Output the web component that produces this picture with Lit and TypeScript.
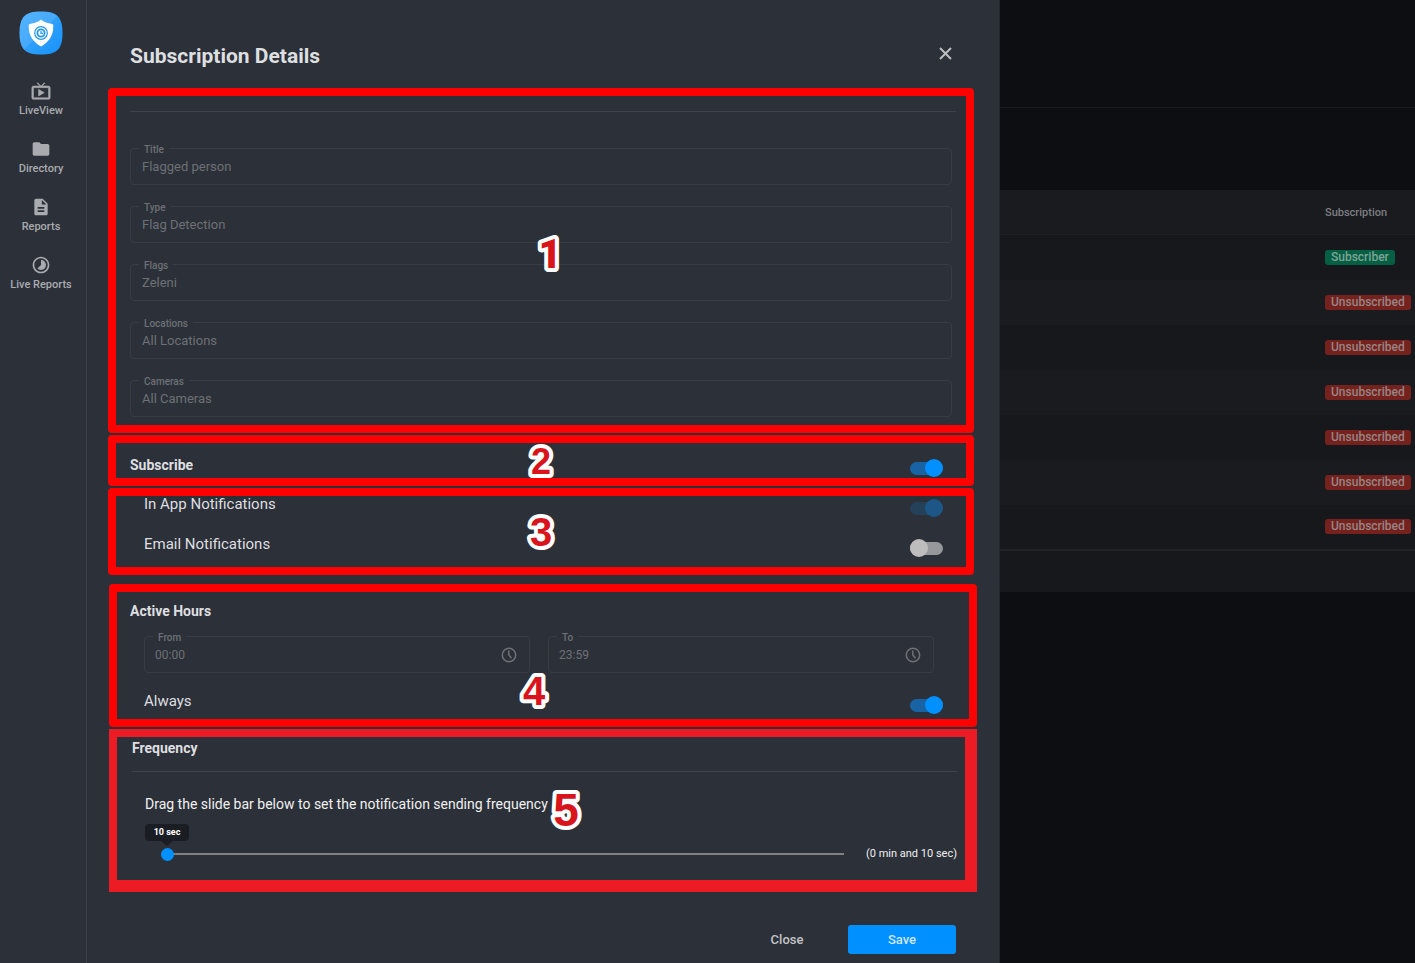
import { LitElement, html, css, svg } from "lit";
import { customElement, property, state } from "lit/decorators.js";
import { classMap } from "lit/directives/class-map.js";

const navIcons = {
  live: svg`<path d="M21 6h-7.590l3.290-3.290L16 2l-4 4-4-4-.7.710L10.590 6H3c-1.100 0-2 .890-2 2v12c0 1.100.9 2 2 2h18c1.100 0 2-.9 2-2V8c0-1.110-.9-2-2-2zm0 14H3V8h18v12zM9 10v8l7-4z" stroke="currentColor" stroke-width=".6"/>`,
  folder: svg`<path d="M10 4H4c-1.100 0-1.990.9-1.990 2L2 18c0 1.100.9 2 2 2h16c1.100 0 2-.9 2-2V8c0-1.100-.9-2-2-2h-8l-2-2z"/>`,
  report: svg`<path d="M14 2H6c-1.100 0-1.990.9-1.990 2L4 20c0 1.100.890 2 1.990 2H18c1.100 0 2-.9 2-2V8l-6-6zm2 16H8v-2h8v2zm0-4H8v-2h8v2zm-3-5V3.500L18.500 9H13z"/>`,
  timelapse: svg`<path d="M16.240 7.760C15.070 6.590 13.540 6 12 6v6l-4.240 4.240c2.340 2.340 6.140 2.340 8.490 0 2.340-2.340 2.340-6.140-.01-8.480zM12 2C6.480 2 2 6.480 2 12s4.480 10 10 10 10-4.480 10-10S17.520 2 12 2zm0 18c-4.420 0-8-3.580-8-8s3.580-8 8-8 8 3.580 8 8-3.580 8-8 8z"/>`,
};

@customElement("side-nav")
export class SideNav extends LitElement {
  static styles = css`
    :host {
      display: flex;
      flex-direction: column;
      align-items: center;
      padding: 11px 4px 0;
      box-sizing: border-box;
      background: #2c3038;
      border-right: 1px solid #3a3e46;
    }
    .logo { display: block; width: 44px; height: 44px; margin-right: 4px; }
    .nav { display: flex; flex-direction: column; gap: 20px; margin-top: 26px; width: 100%; }
    .item {
      display: flex;
      flex-direction: column;
      align-items: center;
      gap: 2px;
      padding-right: 4px;
      color: #a9abaf;
      font-size: 11px;
      font-weight: 500;
      line-height: 16px;
      white-space: nowrap;
      text-decoration: none;
    }
    .item svg { display: block; width: 20px; height: 20px; fill: currentColor; }
  `;
  render() {
    const items = [
      ["LiveView", navIcons.live],
      ["Directory", navIcons.folder],
      ["Reports", navIcons.report],
      ["Live Reports", navIcons.timelapse],
    ];
    return html`
      <svg class="logo" viewBox="0 0 44 44" aria-hidden="true">
        <defs>
          <linearGradient id="g" x1="0" y1="0" x2="1" y2="1">
            <stop offset="0" stop-color="#55b4ff" />
            <stop offset="0.490" stop-color="#45a9fc" />
            <stop offset="0.500" stop-color="#2f9ffb" />
            <stop offset="1" stop-color="#1593fb" />
          </linearGradient>
        </defs>
        <path d="M22 .5C38 .5 43.500 6 43.500 22S38 43.500 22 43.500.5 38 .5 22 6 .5 22 .5z" fill="url(#g)" />
        <path d="M22 8.500C25 11 29 12.300 32.500 12.700c1.300.2 1.800.9 1.800 2.100C34.300 25 30 31 22 35.500 14 31 9.700 25 9.700 14.800c0-1.200.5-1.900 1.800-2.100C15 12.300 19 11 22 8.500z" fill="#fff" />
        <circle cx="22" cy="22" r="6.300" fill="none" stroke="#2196f3" stroke-width="1.200" />
        <circle cx="22" cy="22" r="3.600" fill="none" stroke="#2196f3" stroke-width="1.800" />
        <path d="M22 20v2.300h2" fill="none" stroke="#2196f3" stroke-width="1.200" />
      </svg>
      <nav class="nav">
        ${items.map(([label, icon]) => html`<a class="item" href="#"><svg viewBox="0 0 24 24" aria-hidden="true">${icon}</svg>${label}</a>`)}
      </nav>
    `;
  }
}

@customElement("outlined-field")
export class OutlinedField extends LitElement {
  @property() label = "";
  @property() value = "";
  @property({ type: Boolean }) clock = false;
  static styles = css`
    :host { display: block; position: relative; }
    .box {
      display: flex;
      align-items: center;
      height: 37px;
      box-sizing: border-box;
      padding: 0 12px 0 11px;
      border: 1px solid #383c44;
      border-radius: 4px;
    }
    .label {
      position: absolute;
      top: -5px;
      left: 9px;
      padding: 0 5px;
      background: #2c3038;
      color: #6d7076;
      font-size: 10px;
      font-weight: 500;
      line-height: 14px;
    }
    .input {
      flex: 1;
      min-width: 0;
      padding: 0;
      border: 0;
      outline: 0;
      background: none;
      color: #6d7076;
      font: 13px/16px Roboto, sans-serif;
    }
    .timed { padding-left: 10px; }
    .timed .input { font-size: 12px; }
    .icon { width: 16px; height: 16px; fill: none; stroke: #6d7076; stroke-width: 1.500; }
  `;
  render() {
    return html`
      <label class="label" for="f">${this.label}</label>
      <div class=${classMap({ box: true, timed: this.clock })}>
        <input class="input" id="f" type="text" disabled .value=${this.value} />
        ${this.clock
          ? html`<svg class="icon" viewBox="0 0 16 16" aria-hidden="true"><circle cx="8" cy="8" r="6.700" /><path d="M7.800 3.500V8l2.700 3.200" /></svg>`
          : null}
      </div>
    `;
  }
}

@customElement("toggle-row")
export class ToggleRow extends LitElement {
  @property() label = "";
  @property({ type: Boolean }) on = false;
  @property({ type: Boolean }) disabled = false;
  @property({ type: Boolean }) strong = false;
  static styles = css`
    :host { display: block; }
    .row { display: flex; justify-content: space-between; align-items: flex-start; }
    .text { color: #dedfe0; font-size: 15px; line-height: 16px; }
    .strong { font-size: 14px; font-weight: 700; line-height: 18px; }
    .toggle {
      appearance: none;
      position: relative;
      width: 33px;
      height: 18px;
      margin: 3px 0 0;
    }
    .toggle::before {
      content: "";
      position: absolute;
      inset: 3px 0 2px;
      border-radius: 7px;
      background: #96989c;
    }
    .toggle::after {
      content: "";
      position: absolute;
      top: 0;
      left: 0;
      width: 18px;
      height: 18px;
      border-radius: 50%;
      background: #bdbdbd;
    }
    .toggle:checked::before { background: #1763a4; }
    .toggle:checked::after { left: auto; right: 0; background: #0090ff; }
    .toggle:disabled::before { background: #254059; }
    .toggle:disabled::after { background: #1c5788; }
  `;
  render() {
    return html`
      <div class="row">
        <label class=${classMap({ text: true, strong: this.strong })} for="t">${this.label}</label>
        <input class="toggle" id="t" type="checkbox" .checked=${this.on} ?disabled=${this.disabled} />
      </div>
    `;
  }
}

@customElement("step-mark")
export class StepMark extends LitElement {
  @property() n = "";
  @property({ type: Number }) size = 40;
  static styles = css`
    :host { display: block; position: absolute; transform: translate(-50%, -50%); pointer-events: none; }
    .art { display: block; width: 60px; height: 60px; }
    .digit {
      fill: #d8141c;
      stroke: #ffffff;
      stroke-width: 8px;
      stroke-linejoin: round;
      paint-order: stroke fill;
      font-family: "Liberation Sans", sans-serif;
      font-weight: 700;
      text-anchor: middle;
    }
    .plain { font-family: Roboto, sans-serif; font-weight: 900; }
  `;
  render() {
    return html`
      <svg class="art" viewBox="0 0 60 60">
        <text class=${classMap({ digit: true, plain: this.n === "1" })} x="30" y=${30 + this.size * 0.35} font-size=${this.size}>${this.n}</text>
      </svg>
    `;
  }
}

@customElement("subscription-table")
export class SubscriptionTable extends LitElement {
  @property({ attribute: false }) rows: boolean[] = [];
  static styles = css`
    :host { display: block; background: #0d0e12; overflow: hidden; }
    .top { height: 107px; border-bottom: 1px solid #191a1e; }
    .panel { margin-top: 82px; padding-bottom: 41px; background: #17181c; }
    .table { width: 100%; border-collapse: collapse; table-layout: fixed; }
    .fill { width: auto; }
    .status { width: 90px; }
    .head { height: 44px; padding: 0; text-align: left; background: #1a1b1f; color: #7d7e82; font-size: 11px; font-weight: 500; }
    .cell { height: 45px; padding: 0; box-sizing: border-box; }
    .row:nth-child(even) { background: #1a1b1f; }
    .body { border-top: 1px solid #1f2024; border-bottom: 2px solid #222327; }
    .pill {
      display: block;
      width: fit-content;
      padding: 0 6px;
      border-radius: 3px;
      background: #75211d;
      color: #968584;
      font-size: 12px;
      font-weight: 500;
      line-height: 15px;
    }
    .ok { background: #045f43; color: #7fa396; }
  `;
  render() {
    return html`
      <div class="top"></div>
      <div class="panel">
        <table class="table">
          <colgroup><col class="fill" /><col class="status" /></colgroup>
          <thead><tr><td class="head"></td><th class="head" scope="col">Subscription</th></tr></thead>
          <tbody class="body">
            ${this.rows.map(
              (on) => html`<tr class="row"><td class="cell"></td><td class="cell"><span class=${classMap({ pill: true, ok: on })}>${on ? "Subscriber" : "Unsubscribed"}</span></td></tr>`
            )}
          </tbody>
        </table>
      </div>
    `;
  }
}

@customElement("app-root")
export class AppRoot extends LitElement {
  @state() private seconds = 10;

  static styles = css`
    :host {
      display: grid;
      grid-template-columns: 87px minmax(0, 913fr) minmax(0, 415fr);
      min-height: 100vh;
      background: #0d0e12;
      font-family: Roboto, sans-serif;
    }
    .drawer { display: flex; flex-direction: column; background: #2c3038; box-sizing: border-box; border-right: 1px solid #24272e; }
    .header { display: flex; justify-content: space-between; align-items: center; height: 88px; box-sizing: border-box; padding: 24px 47px 0 43px; }
    .title { margin: 0; color: #dedfe0; font-size: 21px; font-weight: 700; line-height: 28px; }
    .close-x { display: block; width: 13px; height: 13px; padding: 0; border: 0; margin-bottom: 5px; background: none; color: #bcbdc0; }
    .close-x svg { display: block; width: 13px; height: 13px; fill: none; stroke: currentColor; stroke-width: 2; }
    .upper { display: flex; flex-direction: column; gap: 2px; margin: 0 25px 9px 21px; }
    .lower { display: flex; flex-direction: column; gap: 2px; margin: 0 22px 0 22px; }
    .region { position: relative; border: 8px solid #ff0000; border-radius: 4px; }
    .details { padding: 15px 10px 8px 14px; }
    .rule { height: 1px; margin: 0; border: 0; background: #3f4249; }
    .fields { display: flex; flex-direction: column; gap: 21px; padding: 36px 4px 0 0; }
    .subscribe { padding: 13px 23px 1px 14px; }
    .channels { display: flex; flex-direction: column; gap: 19px; padding: 0 23px 10px 28px; }
    .hours { padding: 10px 26px 5px 13px; }
    .heading { margin: 0; color: #dedfe0; font-size: 14px; font-weight: 700; line-height: 18px; }
    .times { display: grid; grid-template-columns: 1fr 1fr; gap: 18px; margin: 16px 9px 20px 14px; }
    .always { margin-left: 14px; }
    .frequency { border: solid #ed1c24; border-width: 8px 12px 12px 8px; border-radius: 0; padding: 2px 8px 19px 15px; }
    .frequency .rule { margin-top: 14px; }
    .hint { margin: 24px 0 0 13px; color: #f1f1f2; font-size: 14px; line-height: 16px; display: block; }
    .slider { display: grid; grid-template-columns: 1fr auto; column-gap: 22px; margin: 12px 0 0 13px; align-items: center; }
    .tip {
      position: relative;
      justify-self: start;
      grid-column: 1 / -1;
      box-sizing: border-box;
      width: 44px;
      margin-bottom: 6px;
      border-radius: 4px;
      background: #1b1d24;
      color: #ffffff;
      font-size: 9px;
      font-weight: 700;
      line-height: 17px;
      text-align: center;
    }
    .tip::after {
      content: "";
      position: absolute;
      top: 100%;
      left: 50%;
      margin-left: -6px;
      border: 6px solid transparent;
      border-top: 5px solid #1b1d24;
      border-bottom: 0;
    }
    .range { appearance: none; height: 13px; margin: 0 0 0 16px; background: linear-gradient(#808185, #808185) center / 100% 2px no-repeat; }
    .range::-webkit-slider-thumb { appearance: none; width: 13px; height: 13px; border-radius: 50%; background: #0090ff; }
    .amount { color: #f1f1f2; font-size: 11px; line-height: 14px; }
    .mark { left: 50%; top: 50%; }
    .high { left: 51%; top: 48%; }
    .low { left: 49%; top: 78%; }
    .late { left: 53%; top: 51%; }
    .footer { display: flex; justify-content: flex-end; align-items: center; gap: 12px; margin-top: auto; padding: 0 43px 9px 0; }
    .button { height: 29px; padding: 0; border: 0; border-radius: 3px; font: 500 13px/16px Roboto, sans-serif; }
    .plain { width: 98px; background: none; color: #c3c4c7; }
    .primary { width: 108px; background: #0090ff; color: #cfe6fb; }
  `;

  private onSlide(e: Event) {
    this.seconds = Number((e.target as HTMLInputElement).value);
  }

  render() {
    const details = [
      ["Title", "Flagged person"],
      ["Type", "Flag Detection"],
      ["Flags", "Zeleni"],
      ["Locations", "All Locations"],
      ["Cameras", "All Cameras"],
    ];
    const s = this.seconds;
    return html`
      <side-nav></side-nav>
      <main class="drawer">
        <header class="header">
          <h1 class="title">Subscription Details</h1>
          <button class="close-x" aria-label="Close panel">
            <svg viewBox="0 0 13 13"><path d="M1 1l11 11M12 1L1 12" /></svg>
          </button>
        </header>
        <div class="upper">
          <section class="region details">
            <hr class="rule" />
            <div class="fields">
              ${details.map(([l, v]) => html`<outlined-field label=${l} value=${v}></outlined-field>`)}
            </div>
            <step-mark class="mark high" n="1"></step-mark>
          </section>
          <section class="region subscribe">
            <toggle-row label="Subscribe" strong on></toggle-row>
            <step-mark class="mark" n="2" size="36"></step-mark>
          </section>
          <section class="region channels">
            <toggle-row label="In App Notifications" on disabled></toggle-row>
            <toggle-row label="Email Notifications"></toggle-row>
            <step-mark class="mark" n="3"></step-mark>
          </section>
        </div>
        <div class="lower">
          <section class="region hours">
            <h2 class="heading">Active Hours</h2>
            <div class="times">
              <outlined-field label="From" value="00:00" clock></outlined-field>
              <outlined-field label="To" value="23:59" clock></outlined-field>
            </div>
            <toggle-row class="always" label="Always" on></toggle-row>
            <step-mark class="mark low" n="4"></step-mark>
          </section>
          <section class="region frequency">
            <h2 class="heading">Frequency</h2>
            <hr class="rule" />
            <label class="hint" for="freq">Drag the slide bar below to set the notification sending frequency</label>
            <div class="slider">
              <output class="tip" for="freq">${s} sec</output>
              <input class="range" id="freq" type="range" min="10" max="600" step="10" .value=${String(s)} @input=${this.onSlide} />
              <span class="amount">(${Math.floor(s / 60)} min and ${s % 60} sec)</span>
            </div>
            <step-mark class="mark late" n="5" size="46"></step-mark>
          </section>
        </div>
        <footer class="footer">
          <button class="button plain">Close</button>
          <button class="button primary">Save</button>
        </footer>
      </main>
      <subscription-table .rows=${[true, false, false, false, false, false, false]}></subscription-table>
    `;
  }
}
